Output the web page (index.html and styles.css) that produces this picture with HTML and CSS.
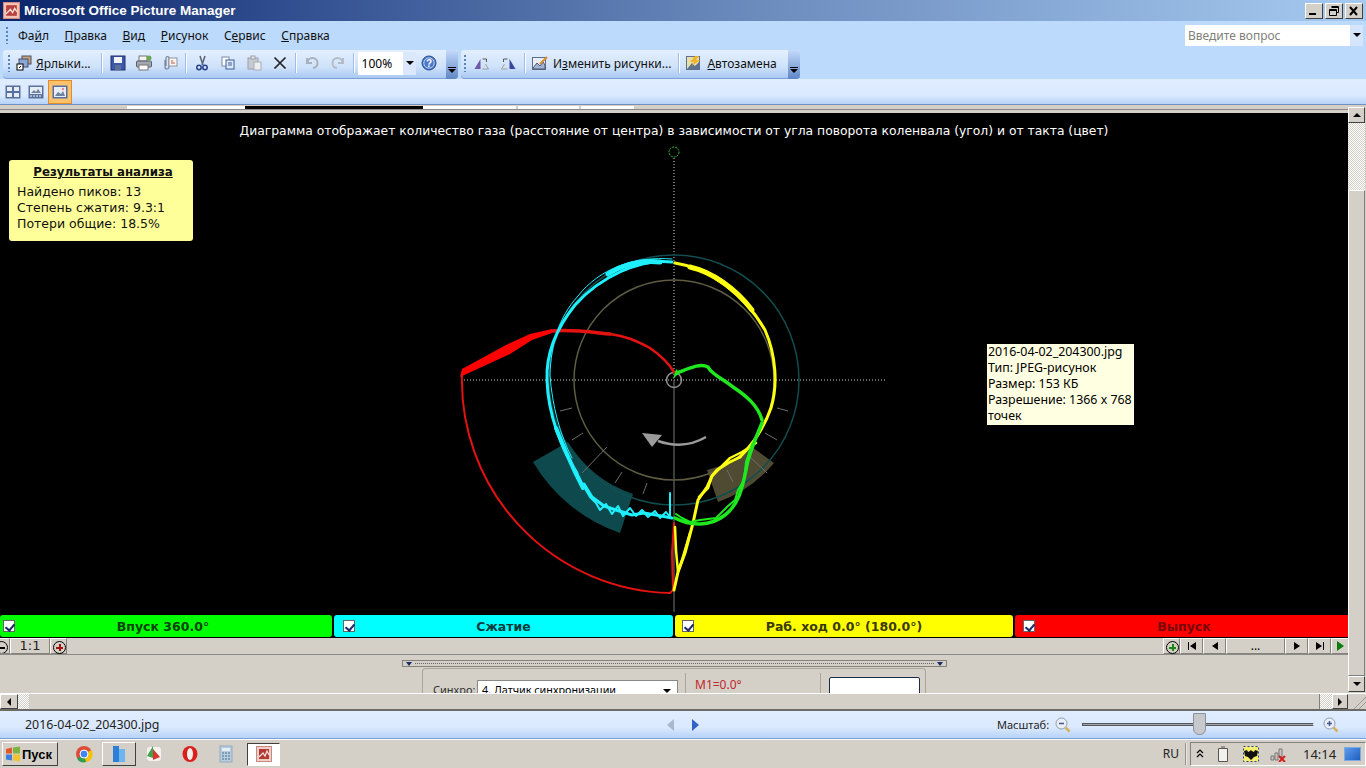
FILE: index.html
```html
<!DOCTYPE html>
<html lang="ru">
<head>
<meta charset="utf-8">
<title>Microsoft Office Picture Manager</title>
<link rel="stylesheet" href="styles.css">
</head>
<body>
<header class="titlebar">
  <svg class="app-ico" viewBox="0 0 16 16"><rect x="0.5" y="0.5" width="15" height="15" fill="#f0c4b8" stroke="#d98a7c"/><rect x="3" y="3" width="10" height="10" fill="#b8403a"/><path d="M3 11l4-4 2 3 2-4 2 3" fill="none" stroke="#f5dcd8" stroke-width="1.3"/></svg>
  <span class="title-text">Microsoft Office Picture Manager</span>
  <div class="winbtns">
    <span class="winbtn"><svg viewBox="0 0 16 14"><rect x="3" y="9" width="7" height="2" fill="#000"/></svg></span>
    <span class="winbtn"><svg viewBox="0 0 16 14"><path d="M5.5 2.5h7v6h-2M3.500 5.500h7v6h-7z M3.500 6.500h7 M5.500 3.500h7" fill="none" stroke="#000"/></svg></span>
    <span class="winbtn"><svg viewBox="0 0 16 14"><path d="M4 3l7 8M11 3l-7 8" stroke="#000" stroke-width="2"/></svg></span>
  </div>
</header>
<div class="menubar">
  <span class="grip"></span>
  <nav class="menu">
    <span>Фа<u>й</u>л</span><span><u>П</u>равка</span><span><u>В</u>ид</span><span><u>Р</u>исунок</span><span>С<u>е</u>рвис</span><span><u>С</u>правка</span>
  </nav>
  <div class="ask"><span class="ask-text">Введите вопрос</span><span class="ask-arrow"></span></div>
</div>
<div class="toolrow">
  <div class="band band-main">
    <span class="grip"></span>
    <span class="tool txt first"><svg viewBox="0 0 16 16"><rect x="6" y="1" width="9" height="8" fill="#c9a27a" stroke="#44506a"/><rect x="3" y="4" width="9" height="8" fill="#8aa7d6" stroke="#44506a"/><rect x="1" y="9" width="6" height="6" fill="#fff" stroke="#000"/><path d="M3 13l2-2" stroke="#000"/></svg><span class="lbl"><u>Я</u>рлыки...</span></span>
    <span class="sep"></span>
    <span class="tool"><svg viewBox="0 0 16 16"><rect x="1" y="1" width="14" height="14" fill="#3b57a8" stroke="#1d2f70"/><rect x="4" y="2" width="8" height="6" fill="#f2f4fa"/><rect x="5" y="10" width="6" height="5" fill="#5c6f9c"/></svg></span>
    <span class="tool"><svg viewBox="0 0 16 16"><rect x="3" y="1" width="8" height="5" fill="#f4f4f4" stroke="#777"/><rect x="0.500" y="6" width="15" height="6" rx="1" fill="#a3a7b0" stroke="#5a5f6a"/><rect x="3" y="10" width="9" height="5" fill="#fff" stroke="#777"/><circle cx="13" cy="3" r="2.500" fill="#6aa84f"/></svg></span>
    <span class="tool"><svg viewBox="0 0 16 16"><path d="M3 5v7a2 2 0 0 0 4 0V3a1.300 1.300 0 0 0-3 0v8" fill="none" stroke="#7b8494" stroke-width="1.200"/><rect x="7" y="3" width="8" height="8" fill="#fbf7ef" stroke="#8b93a5"/><path d="M9 6h2M9 8h4" stroke="#c0504d"/></svg></span>
    <span class="sep"></span>
    <span class="tool"><svg viewBox="0 0 16 16"><path d="M6 1l3 9M11 1l-3 9" stroke="#5b6472" stroke-width="1.500"/><circle cx="5" cy="12.500" r="2.200" fill="none" stroke="#27408b" stroke-width="1.500"/><circle cx="11" cy="12.500" r="2.200" fill="none" stroke="#27408b" stroke-width="1.500"/></svg></span>
    <span class="tool"><svg viewBox="0 0 16 16"><rect x="2" y="2" width="7" height="9" fill="#fff" stroke="#7a8aa8"/><rect x="6" y="5" width="8" height="9" fill="#dfe8f6" stroke="#3e5c9a"/><path d="M8 8h4M8 10h4" stroke="#3e5c9a"/></svg></span>
    <span class="tool"><svg viewBox="0 0 16 16"><rect x="2" y="3" width="10" height="11" fill="#c7cad0" stroke="#9aa0ab"/><rect x="5" y="1" width="4" height="3" fill="#e4e6ea" stroke="#9aa0ab"/><rect x="8" y="7" width="7" height="8" fill="#eceef2" stroke="#a8adb7"/></svg></span>
    <span class="tool"><svg viewBox="0 0 16 16"><path d="M2.500 2.500l11 11M13.500 2.500l-11 11" stroke="#222" stroke-width="1.700"/></svg></span>
    <span class="sep"></span>
    <span class="tool"><svg viewBox="0 0 16 16"><path d="M3 3v5h5M3.500 8A5 5 0 1 1 9 13" fill="none" stroke="#aab0ba" stroke-width="2"/></svg></span>
    <span class="tool"><svg viewBox="0 0 16 16"><path d="M13 3v5H8M12.500 8A5 5 0 1 0 7 13" fill="none" stroke="#b6bcc6" stroke-width="2"/></svg></span>
    <span class="sep"></span>
    <div class="zoombox"><span class="zoomval">100%</span><span class="zoomarrow"></span></div>
    <span class="tool help"><svg viewBox="0 0 16 16"><circle cx="8" cy="8" r="7" fill="#4b78c8" stroke="#2a4a94"/><circle cx="8" cy="8" r="5.200" fill="none" stroke="#b9cff2"/><text x="8" y="11.500" class="help-q">?</text></svg></span>
    <span class="chev"></span>
  </div>
  <div class="band band-edit">
    <span class="grip"></span>
    <span class="tool mir"><svg viewBox="0 0 16 16"><path d="M7 4v10H1z" fill="#6a5aa8"/><path d="M9 14h6l-3-5" fill="#d9dde6" stroke="#9aa0ab"/><path d="M9 4h4v3" fill="none" stroke="#555"/></svg></span>
    <span class="tool mir"><svg viewBox="0 0 16 16"><path d="M9 4v10h6z" fill="#37489c"/><path d="M7 14H1l3-5" fill="#d9dde6" stroke="#9aa0ab"/><path d="M7 4H3v3" fill="none" stroke="#555"/></svg></span>
    <span class="sep"></span>
    <span class="tool txt"><svg viewBox="0 0 16 16"><rect x="0.500" y="2.500" width="13" height="12" fill="#e8eef8" stroke="#5f6f8e"/><path d="M1 13l4-5 3 3 3-4 2 3v4H1z" fill="#9db5d9" stroke="#556"/><path d="M8 9l7-7" stroke="#d98a2b" stroke-width="2"/></svg><span class="lbl">И<u>з</u>менить рисунки...</span></span>
    <span class="sep"></span>
    <span class="tool txt"><svg viewBox="0 0 16 16"><rect x="0.500" y="1.500" width="13" height="13" fill="#e9dfa8" stroke="#5f6f8e"/><path d="M1 14l5-6 3 3 4-4v7z" fill="#5d7390"/><path d="M9 1L4 7h4L6 11l8-6h-4l3-4z" fill="#f0b429"/></svg><span class="lbl"><u>А</u>втозамена</span></span>
    <span class="chev"></span>
  </div>
</div>
<div class="viewbar">
  <span class="vbtn"><svg viewBox="0 0 16 16"><rect x="0.500" y="1.500" width="15" height="13" fill="#56709f"/><path d="M2 3h5v4H2zM9 3h5v4H9zM2 9h5v4H2zM9 9h5v4H9z" fill="#e7ecf5"/></svg></span>
  <span class="vbtn"><svg viewBox="0 0 16 16"><rect x="0.500" y="1.500" width="15" height="13" fill="#56709f"/><rect x="2" y="3" width="12" height="7" fill="#e7ecf5"/><path d="M3 9l3-3 2 2 2-3 3 4z" fill="#70839f"/><path d="M2 12h2M5 12h2M8 12h2M11 12h2" stroke="#fff"/></svg></span>
  <span class="vbtn active"><svg viewBox="0 0 16 16"><rect x="0.500" y="1.500" width="15" height="13" fill="#56709f"/><rect x="2" y="3" width="12" height="10" fill="#e7ecf5"/><path d="M3 12l3-4 3 2 2-3 2 5z" fill="#70839f"/><circle cx="11" cy="5" r="1.200" fill="#e88"/></svg></span>
</div>
<main class="workspace">
  <div class="doc">
    <div class="tabstrip">
      <span class="ts ts1"></span><span class="ts ts2"></span><span class="ts ts3"></span><span class="ts ts4"></span><span class="ts ts5"></span>
    </div>
    <div class="plot">
      <svg class="chart" viewBox="0 113 1348 501">
        <path class="sec-teal" d="M533 462A163 163 0 0 0 620 533L633 494A122 122 0 0 1 568 442z"/>
        <path class="sec-brown" d="M707 470A100 100 0 0 0 752 447L774 463A130 130 0 0 1 718 502z"/>
        <line class="dots" x1="461" y1="380" x2="887" y2="380"/>
        <line class="dots" x1="674" y1="158" x2="674" y2="380"/>
        <line class="vline" x1="674" y1="380" x2="674" y2="612"/>
        <circle class="ring-teal" cx="674" cy="380" r="125"/>
        <circle class="ring-olive" cx="674" cy="380" r="100"/>
        <circle class="ring-hub" cx="674" cy="380" r="7.500"/>
        <circle class="ring-top" cx="674" cy="152" r="5"/>
        <path class="ticks" d="M560 411l12-3M777 408l11 3M572 440l11-7M582 473l25-26M615 483l7-11M643 494l4-11M765 433l12 7M748 455l19 18M727 470l6 12"/>
        <path class="arrow-line" d="M706 437Q684 450 658 441"/>
        <path class="arrow-head" d="M642 433L662 435L652 447z"/>
        <path class="tr-red" d="M674 372C668 362 660 355 650 348C635 340 625 336 610 334" stroke-width="2.500"/>
        <path class="tr-red" d="M610 334C590 332 570 329 552 331" stroke-width="3.500"/>
        <path class="tr-fill-red" d="M552 329L530 334L506 345L462 369L460 377L510 354L532 340L552 333z"/>
        <path class="tr-red" d="M462 373A213 213 0 0 0 670 593L673 590L672 553L674 523" stroke-width="2"/>
        <path class="tr-cyan" d="M672 262C640 258 600 277 575 305C555 330 546 355 547 380C548 415 562 450 577 473" stroke-width="3"/>
        <path class="tr-cyan" d="M672 259C635 256 600 268 578 296C558 318 551 345 550 375C552 405 560 435 572 458" stroke-width="1"/>
        <path class="tr-cyan" d="M660 262C640 260 622 265 608 274" stroke-width="5"/>
        <path class="tr-cyan" d="M556 428L566 452L574 470L583 488" stroke-width="4"/>
        <path class="tr-cyan" d="M577 473L584 487L590 497L596 503L600 510L606 504L612 514L618 506L623 516L630 508L636 516L642 510L648 517L655 511L660 518L666 512L670 517" stroke-width="2"/>
        <path class="tr-cyan" d="M584 484L592 497L604 506L616 510L632 515L644 513L656 515L672 518" stroke-width="3"/>
        <path class="tr-cyan" d="M670 517V493" stroke-width="2"/>
        <path class="tr-yellow" d="M675 263C710 268 745 295 765 330C776 355 778 385 771 408C765 425 755 442 740 457" stroke-width="3"/>
        <path class="tr-yellow" d="M690 267C712 272 735 288 752 310" stroke-width="5"/>
        <path class="tr-yellow" d="M740 457L728 463L717 470L712 476L707 487L698 500L693 523L685 553L678 572L674 590" stroke-width="3"/>
        <path class="tr-yellow" d="M756 443L742 452L730 458L722 466L712 476L708 488L699 497M675 527L676 550L678 572L682 560L690 533" stroke-width="2.500"/>
        <path class="tr-green" d="M677 373C690 368 700 363 708 367C712 375 725 380 733 387C745 395 758 405 762 420" stroke-width="3.500"/>
        <path class="tr-green" d="M762 423C755 440 748 455 746 470C742 490 738 505 725 515C710 527 690 526 675 518" stroke-width="3.500"/>
        <path class="tr-green" d="M752 444L746 462L744 480L738 490L735 500L728 506L716 518L700 520L690 522L682 518L676 514" stroke-width="2"/>
        <path class="tr-fill-green" d="M673 379L676 369L680 373L676 376z"/>
      </svg>
      <section class="results">
        <h2 class="results-title">Результаты анализа</h2>
        <p>Найдено пиков: 13</p>
        <p>Степень сжатия: 9.3:1</p>
        <p>Потери общие: 18.5%</p>
      </section>
      <p class="chart-title">Диаграмма отображает количество газа (расстояние от центра) в зависимости от угла поворота коленвала (угол) и от такта (цвет)</p>
      <div class="tooltip">2016-04-02_204300.jpg<br>Тип: JPEG-рисунок<br>Размер: 153 КБ<br>Разрешение: 1366 x 768 точек</div>
    </div>
    <div class="strokes">
      <div class="stroke s-green"><span class="check"></span><b>Впуск 360.0°</b></div>
      <div class="stroke s-cyan"><span class="check"></span><b>Сжатие</b></div>
      <div class="stroke s-yellow"><span class="check"></span><b>Раб. ход 0.0° (180.0°)</b></div>
      <div class="stroke s-red"><span class="check"></span><b>Выпуск</b></div>
    </div>
    <div class="navrow">
      <span class="nb nb-minus"></span>
      <span class="nb nb-ratio">1:1</span>
      <span class="nb nb-plus"></span>
      <span class="nav-spacer"></span>
      <span class="nb nb-add"></span>
      <span class="nb nb-wide"><svg viewBox="0 0 12 10"><path d="M2 1v8h1V1zM10 1v8L4 5z" fill="#000"/></svg></span>
      <span class="nb nb-wide"><svg viewBox="0 0 12 10"><path d="M9 1v8L3 5z" fill="#000"/></svg></span>
      <span class="nb nb-dots">...</span>
      <span class="nb nb-wide"><svg viewBox="0 0 12 10"><path d="M3 1v8l6-4z" fill="#000"/></svg></span>
      <span class="nb nb-wide"><svg viewBox="0 0 12 10"><path d="M2 1v8l6-4zM9 1v8h1V1z" fill="#000"/></svg></span>
      <span class="nb nb-play"><svg viewBox="0 0 12 10"><path d="M3 0v10l7-5z" fill="#0a7d0a"/></svg></span>
    </div>
    <div class="lower">
      <div class="splitter"><span class="sp-arrow"></span><span class="sp-dots"></span><span class="sp-arrow"></span></div>
      <div class="group">
        <div class="sync"><span class="sync-lbl">Синхро:</span><span class="sync-sel">4. Датчик синхронизации<i class="sel-arrow"></i></span></div>
        <div class="marks">M1=0.0°</div>
        <div class="gbtn"></div>
      </div>
    </div>
  </div>
  <aside class="vscroll">
    <span class="sbtn sbtn-up"><i class="tri-up"></i></span>
    <span class="vchecker"></span>
    <span class="vtrack"></span>
    <span class="sbtn"><i class="tri-down"></i></span>
  </aside>
</main>
<div class="hscroll">
  <span class="sbtn sbtn-l"><i class="tri-left"></i></span>
  <span class="hchecker"></span>
  <span class="htrack"></span>
  <span class="hchecker h2"></span>
  <span class="sbtn sbtn-r"><i class="tri-right"></i></span>
  <span class="resize"></span>
</div>
<div class="statusbar">
  <span class="fname">2016-04-02_204300.jpg</span>
  <div class="pager">
    <svg viewBox="0 0 8 12"><path d="M7 0v12L0 6z" fill="#a9b8d0"/></svg>
    <svg viewBox="0 0 8 12"><path d="M1 0v12l7-6z" fill="#3460c8"/></svg>
  </div>
  <div class="scale">
    <span class="scale-lbl">Масштаб:</span>
    <svg class="mag" viewBox="0 0 16 16"><circle cx="6.500" cy="6.500" r="5.500" fill="#e9eef7" stroke="#8e9ab0"/><path d="M4 6.500h5" stroke="#44598a" stroke-width="1.500"/><path d="M10.500 10.500l4 4" stroke="#d8b15a" stroke-width="2.500"/></svg>
    <div class="slider"><span class="thumb"></span></div>
    <svg class="mag" viewBox="0 0 16 16"><circle cx="6.500" cy="6.500" r="5.500" fill="#e9eef7" stroke="#8e9ab0"/><path d="M4 6.500h5M6.500 4v5" stroke="#44598a" stroke-width="1.500"/><path d="M10.500 10.500l4 4" stroke="#d8b15a" stroke-width="2.500"/></svg>
  </div>
</div>
<footer class="taskbar">
  <button class="start"><svg viewBox="0 0 16 16"><path d="M1 3l6-1.500v6H1z" fill="#e2582a"/><path d="M8 1.500l7-1v7H8z" fill="#7cb342"/><path d="M1 8.500h6v6l-6-1z" fill="#3f7fd9"/><path d="M8 8.500h7v7l-7-1z" fill="#f2c230"/></svg><b>Пуск</b></button>
  <span class="tb"><svg viewBox="0 0 18 18"><circle cx="9" cy="9" r="8" fill="#dd4b39"/><path d="M9 9L2 13.500A8 8 0 0 0 11 17z" fill="#2e9e4f"/><path d="M9 9l2 8a8 8 0 0 0 5.500-12z" fill="#f4c20d"/><circle cx="9" cy="9" r="4" fill="#4285f4" stroke="#fff"/></svg></span>
  <span class="tb tb-raised"><svg viewBox="0 0 18 18"><path d="M3 1h6v16H3z" fill="#2d7ed6"/><path d="M9 4h6v13H9z" fill="#6fb4ee"/></svg></span>
  <span class="tb"><svg viewBox="0 0 18 18"><rect x="2" y="2" width="14" height="14" rx="3" fill="#f4f2ee"/><path d="M8 1L2 11l6 2z" fill="#3fa34d"/><path d="M8 4l7 8-7 3z" fill="#d8362a"/></svg></span>
  <span class="tb"><svg viewBox="0 0 18 18"><ellipse cx="9" cy="9" rx="7.500" ry="8" fill="#d9201c"/><ellipse cx="9" cy="9" rx="3" ry="6" fill="#f3f0ea"/></svg></span>
  <span class="tb"><svg viewBox="0 0 18 18"><rect x="3" y="1" width="12" height="16" fill="#b7cde0" stroke="#95a9bb"/><rect x="5" y="3" width="8" height="3" fill="#e6eef5"/><path d="M5 8h2M8 8h2M11 8h2M5 11h2M8 11h2M11 11h2M5 14h2M8 14h2M11 14h2" stroke="#6d8aa6" stroke-width="1.500"/></svg></span>
  <span class="tb tb-active"><svg viewBox="0 0 18 18"><rect x="1.500" y="1.500" width="15" height="15" fill="#f0cfc8" stroke="#c78a80"/><rect x="4" y="4" width="10" height="10" fill="#b23a35"/><path d="M4 12l4-4 2 3 2-5 2 4" fill="none" stroke="#f4dcd8" stroke-width="1.300"/></svg></span>
  <span class="tb-spacer"></span>
  <span class="lang">RU</span>
  <div class="tray">
    <svg class="t-chev" viewBox="0 0 8 10"><path d="M1 4l3-3 3 3M1 8l3-3 3 3" fill="none" stroke="#000" stroke-width="1.200"/></svg>
    <svg class="t-batt" viewBox="0 0 12 16"><path d="M1.500 2.500h9v13h-9z M4 1h4" fill="#f3f1ec" stroke="#555"/></svg>
    <svg class="t-bat" viewBox="0 0 16 16"><rect width="16" height="16" fill="#f5ee70"/><path d="M1 5l3-1 1 2 2-1 1-1 1 1 2 1 1-2 3 1-1 5-3 1-3 3-3-3-3-1z" fill="#111"/><rect x="0.500" y="0.500" width="15" height="15" fill="none" stroke="#2238a8" stroke-dasharray="2 2"/></svg>
    <svg class="t-net" viewBox="0 0 16 16"><path d="M1 10h3v4H1zM5 7h3v7H5zM9 3h3v8H9z" fill="#c9c6bf" stroke="#777"/><path d="M9 10l6 6M15 10l-6 6" stroke="#d4201c" stroke-width="2"/></svg>
    <span class="clock">14:14</span>
    <span class="desk"></span>
  </div>
</footer>
</body>
</html>
```
FILE: styles.css
```css
* { box-sizing: border-box; }
html, body { margin: 0; padding: 0; height: 100%; overflow: hidden; }
body {
  width: 1366px; height: 768px; display: flex; flex-direction: column;
  font: 12px "Noto Sans", "Liberation Sans", sans-serif; color: #000; background: #d4d0c8;
}
svg { display: block; }

.titlebar {
  height: 21px; flex: none; display: flex; align-items: center; padding: 0 3px;
  background: linear-gradient(90deg, #0a246a 0%, #2f4d8e 20%, #6b8bbd 55%, #a6caf0 100%);
}
.app-ico { width: 17px; height: 17px; margin-right: 4px; }
.title-text { color: #fff; font: bold 13.5px "Liberation Sans", sans-serif; }
.winbtns { margin-left: auto; display: flex; gap: 2px; }
.winbtn { width: 18px; height: 16px; background: #d4d0c8; border: 1px solid; border-color: #fff #404040 #404040 #fff; }

.menubar {
  height: 29px; flex: none; display: flex; align-items: center; padding-left: 6px;
  background: #bcdafc;
}
.grip {
  width: 2px; height: 17px; flex: none;
  background: repeating-linear-gradient(180deg, #5a82c0 0 2px, transparent 2px 4px);
}
.menu { display: flex; gap: 15.6px; margin-left: 10px; font-size: 12px; }
.menu span { white-space: nowrap; color: #111; }
.ask {
  margin-left: auto; margin-right: 3px; width: 178px; height: 21px; background: #fff;
  display: flex; align-items: center; justify-content: space-between;
}
.ask-text { color: #80807c; padding-left: 3px; font-size: 12px; }
.ask-arrow { width: 13px; height: 21px; background: #d3e4fb; position: relative; }
.ask-arrow::after, .zoomarrow::after {
  content: ""; position: absolute; left: 3px; top: 8px; border: 4px solid transparent; border-top: 4px solid #000; border-bottom: 0;
}

.toolrow { height: 29px; flex: none; display: flex; background: #bcdafc; gap: 3px; padding-left: 3px; }
.band {
  height: 29px; display: flex; align-items: center; border-radius: 3px 3px 4px 4px; padding-bottom: 2px;
  background: linear-gradient(180deg, #e3effe 0%, #cfe2fb 60%, #a9c9f3 100%); position: relative;
  border-bottom: 1px solid #7e9fd4;
}
.band-main { width: 455px; padding-left: 5px; }
.band-edit { width: 339px; padding-left: 3px; }
.band .grip { margin-right: 2px; }
.tool { height: 22px; display: flex; align-items: center; padding: 0 5px; flex: none; }
.tool svg { width: 16px; height: 16px; flex: none; }
.tool.txt { padding-left: 4px; }
.tool.first { padding-right: 8px; }
.band-main .tool:not(.txt) { width: 26px; padding: 0 5px; }
.lbl { margin-left: 4px; white-space: nowrap; font-size: 12px; color: #111; }
.sep { width: 1px; height: 20px; background: #9fbde8; border-right: 1px solid #fff; flex: none; margin: 0 2px; box-sizing: content-box; }
.zoombox { width: 58px; height: 23px; background: #fff; display: flex; align-items: center; justify-content: space-between; margin-left: 1px; flex: none; }
.zoomval { padding-left: 4px; font-size: 12px; }
.zoomarrow { width: 13px; height: 23px; background: #dbe8fb; position: relative; }
.zoomarrow::after { top: 9px; }
.chev {
  position: absolute; right: 0; top: 0; bottom: -1px; width: 12px; border-radius: 0 3px 4px 0;
  background: linear-gradient(180deg, #c5dafa, #5e87c8);
}
.chev::after {
  content: ""; position: absolute; left: 2px; top: 19px; border: 4px solid transparent; border-top: 4px solid #000; border-bottom: 0;
}
.chev::before { content: ""; position: absolute; left: 2px; top: 17px; width: 8px; height: 1px; background: #000; }
.help { margin-left: 0; }
.mir svg { width: 17px; }
.band-edit .mir { padding: 0 5px; }
.band-edit .lbl { margin-left: 5px; }

.viewbar {
  height: 26px; flex: none; display: flex; align-items: center; padding-left: 2px; gap: 1px; position: relative; z-index: 1;
  background: linear-gradient(180deg, #e0ecff 0%, #dbe9fe 65%, #b7d3f8 100%); border-bottom: 1px solid #6f8fbe;
}
.vbtn { width: 22px; height: 24px; display: flex; align-items: center; justify-content: center; }
.vbtn svg { width: 16px; height: 16px; }
.vbtn.active { width: 24px; background: #fbc26e; border: 1px solid #e48a2c; }

.workspace { height: 588px; flex: none; display: flex; }
.doc { width: 1348px; flex: none; display: flex; flex-direction: column; min-width: 0; }
.tabstrip { height: 5px; flex: none; background: #d4d0c8; display: flex; padding: 1px 0 0 127px; border-bottom: 1px solid #888; }
.ts { height: 3px; background: #fff; margin-right: 2px; flex: none; }
.ts1 { width: 118px; margin-right: 0; }
.ts2 { width: 178px; background: #000; margin-right: 0; }
.ts3 { width: 93px; }
.ts4 { width: 61px; }
.ts5 { width: 53px; }
.plot {
  height: 504px; flex: none; position: relative; background: #000; border-top: 3px solid #d4d0c8;
}
.chart { width: 1348px; height: 501px; }
.chart-title {
  position: absolute; left: 0; top: 11px; width: 1348px; margin: 0; text-align: center; color: #fff;
  font: 12.33px "DejaVu Sans", sans-serif; white-space: nowrap;
}
.results {
  position: absolute; left: 9px; top: 47px; width: 184px; height: 81px; background: #ffff99; border-radius: 3px;
  padding: 4px 8px; font: 12.5px/16px "DejaVu Sans", sans-serif; color: #111;
}
.results-title { margin: 0 0 4px; padding-left: 4px; font-size: 11.8px; line-height: 16px; text-align: center; text-decoration: underline; font-weight: bold; }
.results p { margin: 0; }
.tooltip {
  position: absolute; left: 987px; top: 231px; width: 147px; height: 81px; background: #ffffe1; color: #000;
  font: 12.4px/16px "Noto Sans", sans-serif; padding: 0 1px;
}
.sec-teal { fill: #0e4a4d; }
.sec-brown { fill: #4f4a32; }
.dots { stroke: #d8d8d8; stroke-width: 1; stroke-dasharray: 1 2; }
.vline { stroke: #6f7f6f; stroke-width: 1; }
.ring-teal, .ring-olive, .ring-hub, .ring-top { fill: none; }
.ring-teal { stroke: #124d50; stroke-width: 1.500; }
.ring-olive { stroke: #5e5c42; stroke-width: 1.500; }
.ring-hub { stroke: #8f8f8f; stroke-width: 1.500; }
.ring-top { stroke: #2fbf2f; stroke-width: 1; stroke-dasharray: 2 1; }
.ticks { stroke: #6e6e6e; stroke-width: 1; fill: none; }
.arrow-line { stroke: #9b9b9b; stroke-width: 2.500; fill: none; }
.arrow-head { fill: #9b9b9b; }
.tr-red, .tr-cyan, .tr-yellow, .tr-green { fill: none; stroke-linejoin: round; stroke-linecap: round; }
.tr-red { stroke: #e51212; }
.tr-cyan { stroke: #1ff0ff; }
.tr-yellow { stroke: #ffff12; }
.tr-green { stroke: #1fe81f; }
.tr-fill-red { fill: #f00; }
.tr-fill-green { fill: #1fe81f; }

.strokes { height: 24px; flex: none; display: flex; background: #000; gap: 2px; padding-top: 1px; }
.stroke {
  flex: none; height: 22px; display: flex; align-items: center; justify-content: center; position: relative;
  border-radius: 3px; font: bold 12.5px "DejaVu Sans", sans-serif;
}
.stroke b { font-weight: bold; }
.check {
  position: absolute; left: 3px; top: 5px; width: 12px; height: 12px; background: #fff; border: 1px solid #666;
}
.check::after {
  content: ""; position: absolute; left: 3px; top: 1px; width: 4px; height: 7px;
  border: solid #1a2a6a; border-width: 0 2px 2px 0; transform: rotate(40deg);
}
.s-green { width: 332px; background: #00ff00; color: #0a420a; padding-right: 6px; }
.s-cyan { width: 339px; background: #00ffff; color: #0a3c3c; }
.s-yellow { width: 338px; background: #ffff00; color: #3a3a08; }
.s-red { width: 333px; background: #ff0000; color: #7a0606; padding-left: 5px; border-radius: 3px 0 0 3px; }
.s-cyan .check { left: 9px; }
.s-yellow .check { left: 7px; }
.s-red .check { left: 8px; }

.navrow { height: 17px; flex: none; display: flex; align-items: flex-start; background: #d4d0c8; border-bottom: 1px solid #8a8a86; }
.nb {
  height: 16px; display: flex; align-items: center; justify-content: center; flex: none; background: #d4d0c8;
  border: 1px solid; border-color: #fff #85827c #85827c #fff;
}
.nb svg { width: 12px; height: 10px; }
.nb-minus { width: 10px; position: relative; border-left: 0; overflow: hidden; }
.nb-minus::after { content: ""; position: absolute; left: -5px; top: 2px; width: 11px; height: 11px; border-radius: 50%; border: 1px solid #000; background: linear-gradient(#000, #000) center/6px 2px no-repeat; }
.nb-ratio { width: 40px; font: 13px/16px "DejaVu Sans", sans-serif; color: #222; }
.nb-plus { width: 17px; position: relative; }
.nb-plus::after { content: ""; position: absolute; left: 2px; top: 2px; width: 11px; height: 11px; border-radius: 50%; border: 1px solid #000; background: linear-gradient(#a31212, #a31212) center/7px 2px no-repeat, linear-gradient(#a31212, #a31212) center/2px 7px no-repeat; }
.nav-spacer { flex: 1; }
.nb-add { width: 17px; position: relative; }
.nb-add::after { content: ""; position: absolute; left: 2px; top: 2px; width: 11px; height: 11px; border-radius: 50%; border: 1px solid #000; background: linear-gradient(#138a13, #138a13) center/7px 2px no-repeat, linear-gradient(#138a13, #138a13) center/2px 7px no-repeat; }
.nb-wide { width: 23px; }
.nb-dots { width: 59px; font-size: 12px; line-height: 12px; }
.nb-play { width: 17px; justify-content: flex-start; padding-left: 2px; border-right: 0; }

.lower { flex: 1; background: #d4d0c8; overflow: hidden; display: flex; flex-direction: column; align-items: flex-start; padding-top: 5px; }
.splitter {
  width: 545px; height: 7px; margin-left: 402px; flex: none; border: 1px solid #85827c; background: #d4d0c8;
  display: flex; align-items: center; justify-content: space-between; padding: 0 3px;
}
.sp-arrow { border: 3px solid transparent; border-top: 4px solid #1a2a6a; border-bottom: 0; flex: none; }
.sp-dots { flex: 1; margin: 0 3px; height: 1px; background: repeating-linear-gradient(90deg, #666 0 1px, transparent 1px 2px); }
.group {
  width: 504px; height: 60px; margin: 1px 0 0 422px; flex: none; border: 1px solid #aaa69e; border-bottom: 0; border-radius: 4px 4px 0 0;
  display: flex; padding: 4px 0 0 10px; font-size: 11px;
}
.sync { display: flex; align-items: flex-start; width: 253px; height: 40px; padding-top: 7px; border-right: 1px solid #aaa69e; flex: none; }
.sync-lbl { width: 44px; flex: none; margin-top: 2px; color: #333; }
.sync-sel { width: 201px; height: 20px; flex: none; background: #fff; border: 1px solid #888; padding-left: 4px; position: relative; font: 10.8px/18px "Noto Sans", sans-serif; white-space: nowrap; }
.sel-arrow { position: absolute; right: 6px; top: 8px; border: 4px solid transparent; border-top: 4px solid #000; border-bottom: 0; }
.marks { width: 135px; height: 40px; padding: 3px 0 0 9px; color: #c0282c; font-size: 12px; border-right: 1px solid #aaa69e; flex: none; }
.gbtn { width: 91px; height: 30px; margin: 4px 0 0 8px; background: #fff; border: 1px solid #1a2a4a; border-radius: 2px; flex: none; }

.vscroll { width: 18px; flex: none; display: flex; flex-direction: column; margin-top: 2px; padding-right: 1px; position: relative; z-index: 2; }
.sbtn { width: 17px; height: 16px; background: #d4d0c8; border: 1px solid; border-color: #fff #404040 #404040 #fff; display: flex; align-items: center; justify-content: center; flex: none; }
.sbtn i { display: block; width: 0; height: 0; border: 4px solid transparent; }
.tri-up { border-bottom: 4px solid #000 !important; border-top: 0 !important; }
.tri-down { border-top: 4px solid #000 !important; border-bottom: 0 !important; }
.tri-left { border-right: 4px solid #000 !important; border-left: 0 !important; }
.tri-right { border-left: 4px solid #000 !important; border-right: 0 !important; }
.vchecker, .hchecker {
  background: repeating-conic-gradient(#d4d0c8 0 25%, #fff 0 50%) 0 0 / 2px 2px;
}
.vchecker { height: 67px; flex: none; }
.vtrack { flex: 1; background: #d4d0c8; border: 1px solid; border-color: #fff #808080 #808080 #fff; }
.vscroll .sbtn:last-child { margin-bottom: 1px; }

.hscroll { height: 18px; flex: none; display: flex; background: #d4d0c8; border-top: 1px solid #fff; border-bottom: 2px solid #6a6a68; }
.hscroll .sbtn { height: 15px; }
.sbtn-l { width: 18px; }
.hchecker { width: 11px; flex: none; }
.htrack { flex: 1; border-right: 1px solid #808080; }
.hchecker.h2 { width: 12px; }
.hscroll .sbtn-r { width: 16px; }
.resize { width: 18px; flex: none; background: linear-gradient(135deg, #d4d0c8 62%, #999 62% 66%, #d4d0c8 66% 76%, #999 76% 80%, #d4d0c8 80%); }

.statusbar {
  height: 28px; flex: none; display: flex; align-items: center;
  background: linear-gradient(180deg, #e0ecff 0%, #dbe9fe 60%, #b7d3f8 100%); border-bottom: 1px solid #7e9fd4;
}
.fname { margin-left: 25px; width: 624px; font-size: 12.4px; color: #222; flex: none; }
.pager { display: flex; gap: 16px; width: 330px; flex: none; margin-left: 18px; }
.pager svg { width: 8px; height: 12px; }
.scale { display: flex; align-items: center; }
.scale-lbl { font-size: 11px; color: #222; margin-right: 6px; white-space: nowrap; }
.mag { width: 16px; height: 16px; }
.slider { width: 232px; height: 3px; margin: 0 9px 0 11px; background: #9ea3aa; border: 1px solid #55585e; border-right-color: #fff; position: relative; }
.thumb { position: absolute; left: 110px; top: -11px; width: 13px; height: 22px; background: #c6c8cc; border: 1px solid #8e9096; border-radius: 1px 1px 6px 6px; }

.taskbar { height: 29px; flex: none; display: flex; align-items: center; background: #d4d0c8; border-top: 1px solid #fff; padding-left: 2px; }
.start {
  width: 56px; height: 24px; display: flex; align-items: center; gap: 1px; padding: 0 2px; margin: 0 8px 0 0;
  background: #d4d0c8; border: 1px solid; border-color: #fff #404040 #404040 #fff; font: bold 13px "Liberation Sans", sans-serif; flex: none;
}
.start svg { width: 16px; height: 16px; flex: none; }
.tb { width: 36px; height: 24px; display: flex; align-items: center; justify-content: center; flex: none; }
.tb svg { width: 18px; height: 18px; }
.tb-raised { width: 34px; border: 1px solid; border-color: #fff #404040 #404040 #fff; }
.tb-active { width: 33px; height: 23px; background: #fff; border: 1px solid; border-color: #404040 #fff #fff #404040; margin-left: 3px; }
.tb-spacer { flex: 1; }
.lang { font-size: 12px; padding-right: 6px; margin-right: 3px; color: #222; border-right: 2px groove #e8e6e0; line-height: 22px; }
.tray {
  width: 176px; height: 24px; flex: none; display: flex; align-items: center; border: 1px solid; border-color: #85827c #fff #fff #85827c; padding-left: 5px;
}
.t-chev { width: 8px; height: 10px; margin-right: 13px; }
.t-batt { width: 12px; height: 16px; margin-right: 14px; }
.t-bat { width: 16px; height: 16px; margin-right: 11px; }
.t-net { width: 16px; height: 16px; margin-right: 17px; }
.clock { font-size: 13px; color: #222; margin-right: 8px; }
.desk { width: 17px; height: 14px; background: linear-gradient(135deg, #5f9bea, #1d5fc2); border: 1px solid #7fa9dc; }
.help-q { font: bold 10px "Liberation Sans", sans-serif; fill: #fff; text-anchor: middle; }
```
